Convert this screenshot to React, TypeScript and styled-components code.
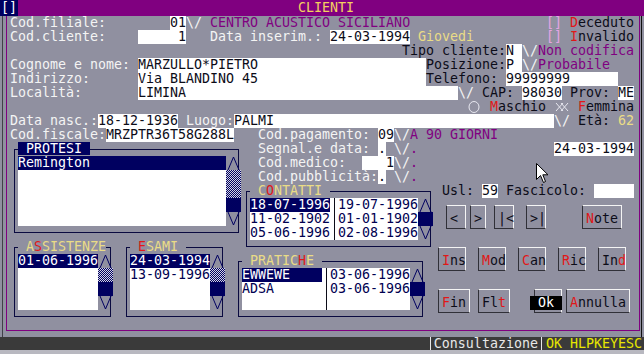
import React from 'react';
import styled, { createGlobalStyle, css } from 'styled-components';

const CELL_W = 8;
const CELL_H = 14;

const palette = {
  panel: '#9090a0',
  label: '#f4f4f4',
  ink: '#0c0c18',
  listInk: '#000050',
  purple: '#800080',
  gold: '#eadc86',
  red: '#e01818',
  pink: '#e4a4e4',
  navy: '#000060',
  frame: '#0a0a40',
  status: '#3a3a3a',
};

type Tone = 'label' | 'ink' | 'purple' | 'gold' | 'pink';

const tones: Record<Tone, string> = {
  label: palette.label,
  ink: palette.ink,
  purple: palette.purple,
  gold: palette.gold,
  pink: palette.pink,
};

type Cell = { $c: number; $r: number; $w?: number; $h?: number };

const place = ({ $c, $r, $w = 1, $h = 1 }: Cell) => css`
  grid-column: ${$c + 1} / span ${$w};
  grid-row: ${$r + 1} / span ${$h};
`;

const GlobalStyle = createGlobalStyle`
  html, body {
    margin: 0;
    padding: 0;
  }
  body {
    background: ${palette.panel};
    font-family: "DejaVu Sans Mono", "Liberation Mono", monospace;
    font-size: 13.3px;
  }
`;

const Window = styled.div`
  width: 644px;
  height: 354px;
  display: flex;
  flex-direction: column;
  overflow: hidden;
`;

const TitleBar = styled.div`
  height: 16px;
  flex: none;
  display: grid;
  grid-template-columns: 18px 1fr 10px;
  align-items: center;
  background: ${palette.purple};
  line-height: 16px;
`;

const SysBox = styled.span`
  height: 16px;
  background: ${palette.navy};
  color: #fff;
  text-align: center;
`;

const Title = styled.span`
  text-align: center;
  color: #f4d060;
`;

const Body = styled.div`
  flex: 1;
  margin: 0 2px;
  border-left: 1px solid #404048;
  border-right: 1px solid #101010;
`;

const Frame = styled.div`
  margin: 0 1px 0 3px;
  padding: 0 0 6px 3px;
  border: 1px solid ${palette.purple};
  border-top: none;
`;

const Screen = styled.div`
  position: relative;
  display: grid;
  grid-template-columns: repeat(78, ${CELL_W}px);
  grid-template-rows: repeat(22, ${CELL_H}px);
  line-height: ${CELL_H}px;
  white-space: pre;
`;

const Text = styled.span<Cell & { $tone?: Tone }>`
  ${place};
  color: ${({ $tone = 'label' }) => tones[$tone]};
`;

const Key = styled.span`
  color: ${palette.red};
`;

const Field = styled.span<Cell & { $right?: boolean }>`
  ${place};
  background: #fff;
  color: ${palette.ink};
  text-align: ${({ $right }) => ($right ? 'right' : 'left')};
`;

const Mark = styled.svg<Cell>`
  ${place};
  width: 16px;
  height: 14px;
  fill: none;
  stroke: #e8e8f0;
  stroke-width: 1;
`;

const Group = styled.div<Cell>`
  ${place};
  display: grid;
  grid-template-columns: repeat(${({ $w = 1 }) => $w}, ${CELL_W}px);
  grid-template-rows: repeat(${({ $h = 1 }) => $h}, ${CELL_H}px);
`;

const Outline = styled.div`
  grid-column: 1 / -1;
  grid-row: 1 / -1;
  margin: 7px 3px 7px 4px;
  border: 1px solid ${palette.frame};
`;

const Caption = styled.span<Cell>`
  ${place};
  background: ${palette.panel};
  color: ${palette.gold};
`;

const Tab = styled.span<Cell>`
  ${place};
  height: 13px;
  line-height: 13px;
  background: ${palette.navy};
  color: #fff;
`;

const List = styled.div<Cell>`
  ${place};
  background: #fff;
  color: ${palette.listInk};
  display: flex;
  flex-direction: column;
`;

const ListRow = styled.div<{ $on?: boolean }>`
  height: ${CELL_H}px;
  ${({ $on }) =>
    $on &&
    css`
      background: ${palette.navy};
      color: #fff;
    `}
`;

const Table = styled.div<Cell>`
  ${place};
  display: grid;
  grid-template-columns: 80px 8px 80px;
  grid-auto-rows: ${CELL_H}px;
  color: ${palette.listInk};
  background: linear-gradient(${palette.ink}, ${palette.ink}) 84px 0 / 1px 100% no-repeat, #fff;
`;

const TableCell = styled.span<{ $col: number; $on?: boolean }>`
  grid-column: ${({ $col }) => $col};
  ${({ $on }) =>
    $on &&
    css`
      background: ${palette.navy};
      color: #fff;
    `}
`;

const Scroll = styled.div<Cell>`
  ${place};
  margin-right: 1px;
  display: flex;
  flex-direction: column;
`;

const Track = styled.div`
  flex: 1;
  background: repeating-conic-gradient(${palette.navy} 0 25%, #d4d4e4 0 50%) 0 0 / 2px 2px;
`;

const Thumb = styled.div`
  flex: none;
  height: ${CELL_H}px;
  background: ${palette.navy};
`;

const ArrowSvg = styled.svg`
  flex: none;
  width: 15px;
  height: ${CELL_H}px;
  fill: none;
  stroke: ${palette.navy};
  stroke-width: 1;
`;

const Button = styled.div<Cell & { $mr?: number }>`
  ${place};
  margin: 7px ${({ $mr = 0 }) => $mr}px 11px 4px;
  padding: 6px 0 0 3px;
  border-top: 1px solid #f4f4f4;
  border-right: 1px solid #f4f4f4;
  border-left: 1px solid #303038;
  border-bottom: 1px solid #303038;
  color: ${palette.ink};
  line-height: ${CELL_H}px;
`;

const Focus = styled.span`
  display: inline-block;
  margin-left: -8px;
  padding: 0 8px;
  background: #000;
  color: #fff;
`;

const Pointer = styled.svg`
  position: absolute;
  left: 526px;
  top: 147px;
  width: 13px;
  height: 21px;
`;

const StatusBar = styled.div`
  height: 13px;
  flex: none;
  display: flex;
  justify-content: flex-end;
  background: ${palette.status};
  line-height: 13px;
  white-space: pre;
`;

const StatusCell = styled.span<{ $gold?: boolean }>`
  border-left: 1px solid #e8e8e8;
  padding: 0 ${({ $gold }) => ($gold ? '2px 0 4px' : '3px 0 3px')};
  color: ${({ $gold }) => ($gold ? '#e8e800' : '#e8e8e8')};
`;

const BottomEdge = styled.div`
  height: 4px;
  flex: none;
  background: #b8b8c0;
`;

function Drop({ c, r }: { c: number; r: number }) {
  return (
    <Text $c={c} $r={r} $w={2}>
      {'\\/'}
    </Text>
  );
}

function Arrow({ up }: { up?: boolean }) {
  return (
    <ArrowSvg viewBox="0 0 15 14">
      <polyline points={up ? '2,14 7.5,1 13,14' : '2,0 7.5,13 13,0'} />
    </ArrowSvg>
  );
}

function ScrollBar({ c, r, rows }: { c: number; r: number; rows: number }) {
  return (
    <Scroll $c={c} $r={r} $w={2} $h={rows}>
      <Arrow up />
      {rows > 3 ? <Track /> : null}
      <Thumb />
      <Arrow />
    </Scroll>
  );
}

const contatti = [
  ['18-07-1996', '19-07-1996'],
  ['11-02-1902', '01-01-1902'],
  ['05-06-1996', '02-08-1996'],
];

const pratiche = [
  ['EWWEWE', '03-06-1996'],
  ['ADSA', '03-06-1996'],
];

function TwoColumnList({ c, r, rows }: { c: number; r: number; rows: string[][] }) {
  return (
    <Table $c={c} $r={r} $w={21} $h={3}>
      {rows.map(([a, b], i) => (
        <React.Fragment key={i}>
          <TableCell $col={1} $on={i === 0}>
            {a}
          </TableCell>
          <TableCell $col={3}>{b}</TableCell>
        </React.Fragment>
      ))}
    </Table>
  );
}

export default function App() {
  return (
    <>
      <GlobalStyle />
      <Window>
        <TitleBar>
          <SysBox>[]</SysBox>
          <Title>CLIENTI</Title>
        </TitleBar>
        <Body>
          <Frame>
            <Screen>
              {/* anagrafica */}
              <Text $c={0} $r={0}>Cod.filiale:</Text>
              <Field $c={20} $r={0} $w={2}>01</Field>
              <Drop c={22} r={0} />
              <Text $c={25} $r={0} $tone="purple">CENTRO ACUSTICO SICILIANO</Text>
              <Text $c={67} $r={0} $tone="pink">[]</Text>
              <Text $c={70} $r={0} $tone="ink">
                <Key>D</Key>eceduto
              </Text>

              <Text $c={0} $r={1}>Cod.cliente:</Text>
              <Field $c={16} $r={1} $w={6} $right>1</Field>
              <Text $c={25} $r={1}>Data inserim.:</Text>
              <Field $c={40} $r={1} $w={10}>24-03-1994</Field>
              <Text $c={51} $r={1} $tone="gold">Giovedi</Text>
              <Text $c={67} $r={1} $tone="pink">[]</Text>
              <Text $c={70} $r={1} $tone="ink">
                <Key>I</Key>nvalido
              </Text>

              <Text $c={49} $r={2} $tone="ink">Tipo cliente:</Text>
              <Field $c={62} $r={2} $w={2}>N</Field>
              <Drop c={64} r={2} />
              <Text $c={66} $r={2} $tone="purple">Non codifica</Text>

              <Text $c={0} $r={3}>Cognome e nome:</Text>
              <Field $c={16} $r={3} $w={36}>MARZULLO*PIETRO</Field>
              <Text $c={52} $r={3} $tone="ink">Posizione:</Text>
              <Field $c={62} $r={3} $w={2}>P</Field>
              <Drop c={64} r={3} />
              <Text $c={66} $r={3} $tone="purple">Probabile</Text>

              <Text $c={0} $r={4}>Indirizzo:</Text>
              <Field $c={16} $r={4} $w={36}>Via BLANDINO 45</Field>
              <Text $c={52} $r={4} $tone="ink">Telefono:</Text>
              <Field $c={62} $r={4} $w={14}>99999999</Field>

              <Text $c={0} $r={5}>Località:</Text>
              <Field $c={16} $r={5} $w={40}>LIMINA</Field>
              <Drop c={56} r={5} />
              <Text $c={59} $r={5} $tone="ink">CAP:</Text>
              <Field $c={64} $r={5} $w={5}>98030</Field>
              <Text $c={70} $r={5} $tone="ink">Prov:</Text>
              <Field $c={76} $r={5} $w={2}>ME</Field>

              <Mark $c={57} $r={6} $w={2} viewBox="0 0 16 14">
                <ellipse cx="8" cy="7" rx="5" ry="5.5" />
              </Mark>
              <Text $c={60} $r={6} $tone="ink">
                <Key>M</Key>aschio
              </Text>
              <Mark $c={68} $r={6} $w={2} viewBox="0 0 16 14">
                <path d="M2 3 L9 11 M9 3 L2 11 M7 3 L14 11 M14 3 L7 11" />
              </Mark>
              <Text $c={71} $r={6} $tone="ink">
                <Key>F</Key>emmina
              </Text>

              <Text $c={0} $r={7}>Data nasc.:</Text>
              <Field $c={11} $r={7} $w={10}>18-12-1936</Field>
              <Text $c={22} $r={7}>Luogo:</Text>
              <Field $c={28} $r={7} $w={40}>PALMI</Field>
              <Drop c={68} r={7} />
              <Text $c={71} $r={7} $tone="ink">Età:</Text>
              <Text $c={76} $r={7} $tone="gold">62</Text>

              <Text $c={0} $r={8}>Cod.fiscale:</Text>
              <Field $c={12} $r={8} $w={16}>MRZPTR36T58G288L</Field>

              {/* codici */}
              <Text $c={31} $r={8}>Cod.pagamento:</Text>
              <Field $c={46} $r={8} $w={2}>09</Field>
              <Drop c={48} r={8} />
              <Text $c={50} $r={8} $tone="purple">A 90 GIORNI</Text>

              <Text $c={31} $r={9}>Segnal.e data:</Text>
              <Field $c={46} $r={9}>.</Field>
              <Drop c={48} r={9} />
              <Text $c={50} $r={9} $tone="purple">.</Text>
              <Field $c={68} $r={9} $w={10}>24-03-1994</Field>

              <Text $c={31} $r={10}>Cod.medico:</Text>
              <Field $c={44} $r={10} $w={4} $right>1</Field>
              <Drop c={48} r={10} />
              <Text $c={50} $r={10} $tone="purple">.</Text>

              <Text $c={31} $r={11}>Cod.pubblicità:</Text>
              <Field $c={46} $r={11}>.</Field>
              <Drop c={48} r={11} />
              <Text $c={50} $r={11} $tone="purple">.</Text>

              <Text $c={54} $r={12} $tone="ink">Usl:</Text>
              <Field $c={59} $r={12} $w={2}>59</Field>
              <Text $c={62} $r={12} $tone="ink">Fascicolo:</Text>
              <Field $c={73} $r={12} $w={5} />

              {/* riquadri */}
              <Group $c={0} $r={9} $w={29} $h={7}>
                <Outline />
                <Tab $c={1} $r={0} $w={9}> PROTESI </Tab>
                <List $c={1} $r={1} $w={26} $h={5}>
                  <ListRow $on>Remington</ListRow>
                </List>
                <ScrollBar c={27} r={1} rows={5} />
              </Group>

              <Group $c={29} $r={12} $w={24} $h={5}>
                <Outline />
                <Caption $c={1} $r={0} $w={10}>
                  {' C'}
                  <Key>O</Key>
                  {'NTATTI '}
                </Caption>
                <TwoColumnList c={1} r={1} rows={contatti} />
                <ScrollBar c={22} r={1} rows={3} />
              </Group>

              <Group $c={0} $r={16} $w={13} $h={6}>
                <Outline />
                <Caption $c={1} $r={0} $w={11}>
                  {' A'}
                  <Key>S</Key>
                  SISTENZE
                </Caption>
                <List $c={1} $r={1} $w={10} $h={4}>
                  <ListRow $on>01-06-1996</ListRow>
                </List>
                <ScrollBar c={11} r={1} rows={4} />
              </Group>

              <Group $c={14} $r={16} $w={13} $h={6}>
                <Outline />
                <Caption $c={1} $r={0} $w={7}>
                  {' '}
                  <Key>E</Key>
                  {'SAMI '}
                </Caption>
                <List $c={1} $r={1} $w={10} $h={4}>
                  <ListRow $on>24-03-1994</ListRow>
                  <ListRow>13-09-1996</ListRow>
                </List>
                <ScrollBar c={11} r={1} rows={4} />
              </Group>

              <Group $c={28} $r={17} $w={24} $h={5}>
                <Outline />
                <Caption $c={1} $r={0} $w={10}>
                  {' PRATIC'}
                  <Key>H</Key>
                  {'E '}
                </Caption>
                <TwoColumnList c={1} r={1} rows={pratiche} />
                <ScrollBar c={22} r={1} rows={3} />
              </Group>

              {/* pulsanti */}
              <Button $c={54} $r={13} $w={3} $h={3}>{'<'}</Button>
              <Button $c={57} $r={13} $w={3} $h={3} $mr={4}>{'>'}</Button>
              <Button $c={60} $r={13} $w={3} $h={3}>{'|<'}</Button>
              <Button $c={64} $r={13} $w={3} $h={3}>{'>|'}</Button>
              <Button $c={71} $r={13} $w={6} $h={3} $mr={4}>
                <Key>N</Key>ote
              </Button>

              <Button $c={53} $r={16} $w={4} $h={3}>
                <Key>I</Key>ns
              </Button>
              <Button $c={58} $r={16} $w={4} $h={3}>
                <Key>M</Key>od
              </Button>
              <Button $c={63} $r={16} $w={4} $h={3}>
                <Key>C</Key>an
              </Button>
              <Button $c={68} $r={16} $w={4} $h={3}>
                <Key>R</Key>ic
              </Button>
              <Button $c={73} $r={16} $w={4} $h={3}>
                In<Key>d</Key>
              </Button>

              <Button $c={53} $r={19} $w={5} $h={3} $mr={4}>
                <Key>F</Key>in
              </Button>
              <Button $c={58} $r={19} $w={5} $h={3} $mr={4}>
                Fl<Key>t</Key>
              </Button>
              <Button $c={65} $r={19} $w={4} $h={3}>
                <Focus>Ok</Focus>
              </Button>
              <Button $c={69} $r={19} $w={9} $h={3} $mr={4}>
                <Key>A</Key>nnulla
              </Button>

              <Pointer viewBox="0 0 13 21">
                <path d="M0.5 0.5 L0.5 16.5 L4.5 12.5 L7.5 19.5 L9.5 18.5 L6.8 11.8 L12 11.8 Z" fill="#fff" stroke="#000" />
              </Pointer>
            </Screen>
          </Frame>
        </Body>
        <StatusBar>
          <StatusCell>Consultazione</StatusCell>
          <StatusCell $gold>OK HLPKEYESC</StatusCell>
        </StatusBar>
        <BottomEdge />
      </Window>
    </>
  );
}
